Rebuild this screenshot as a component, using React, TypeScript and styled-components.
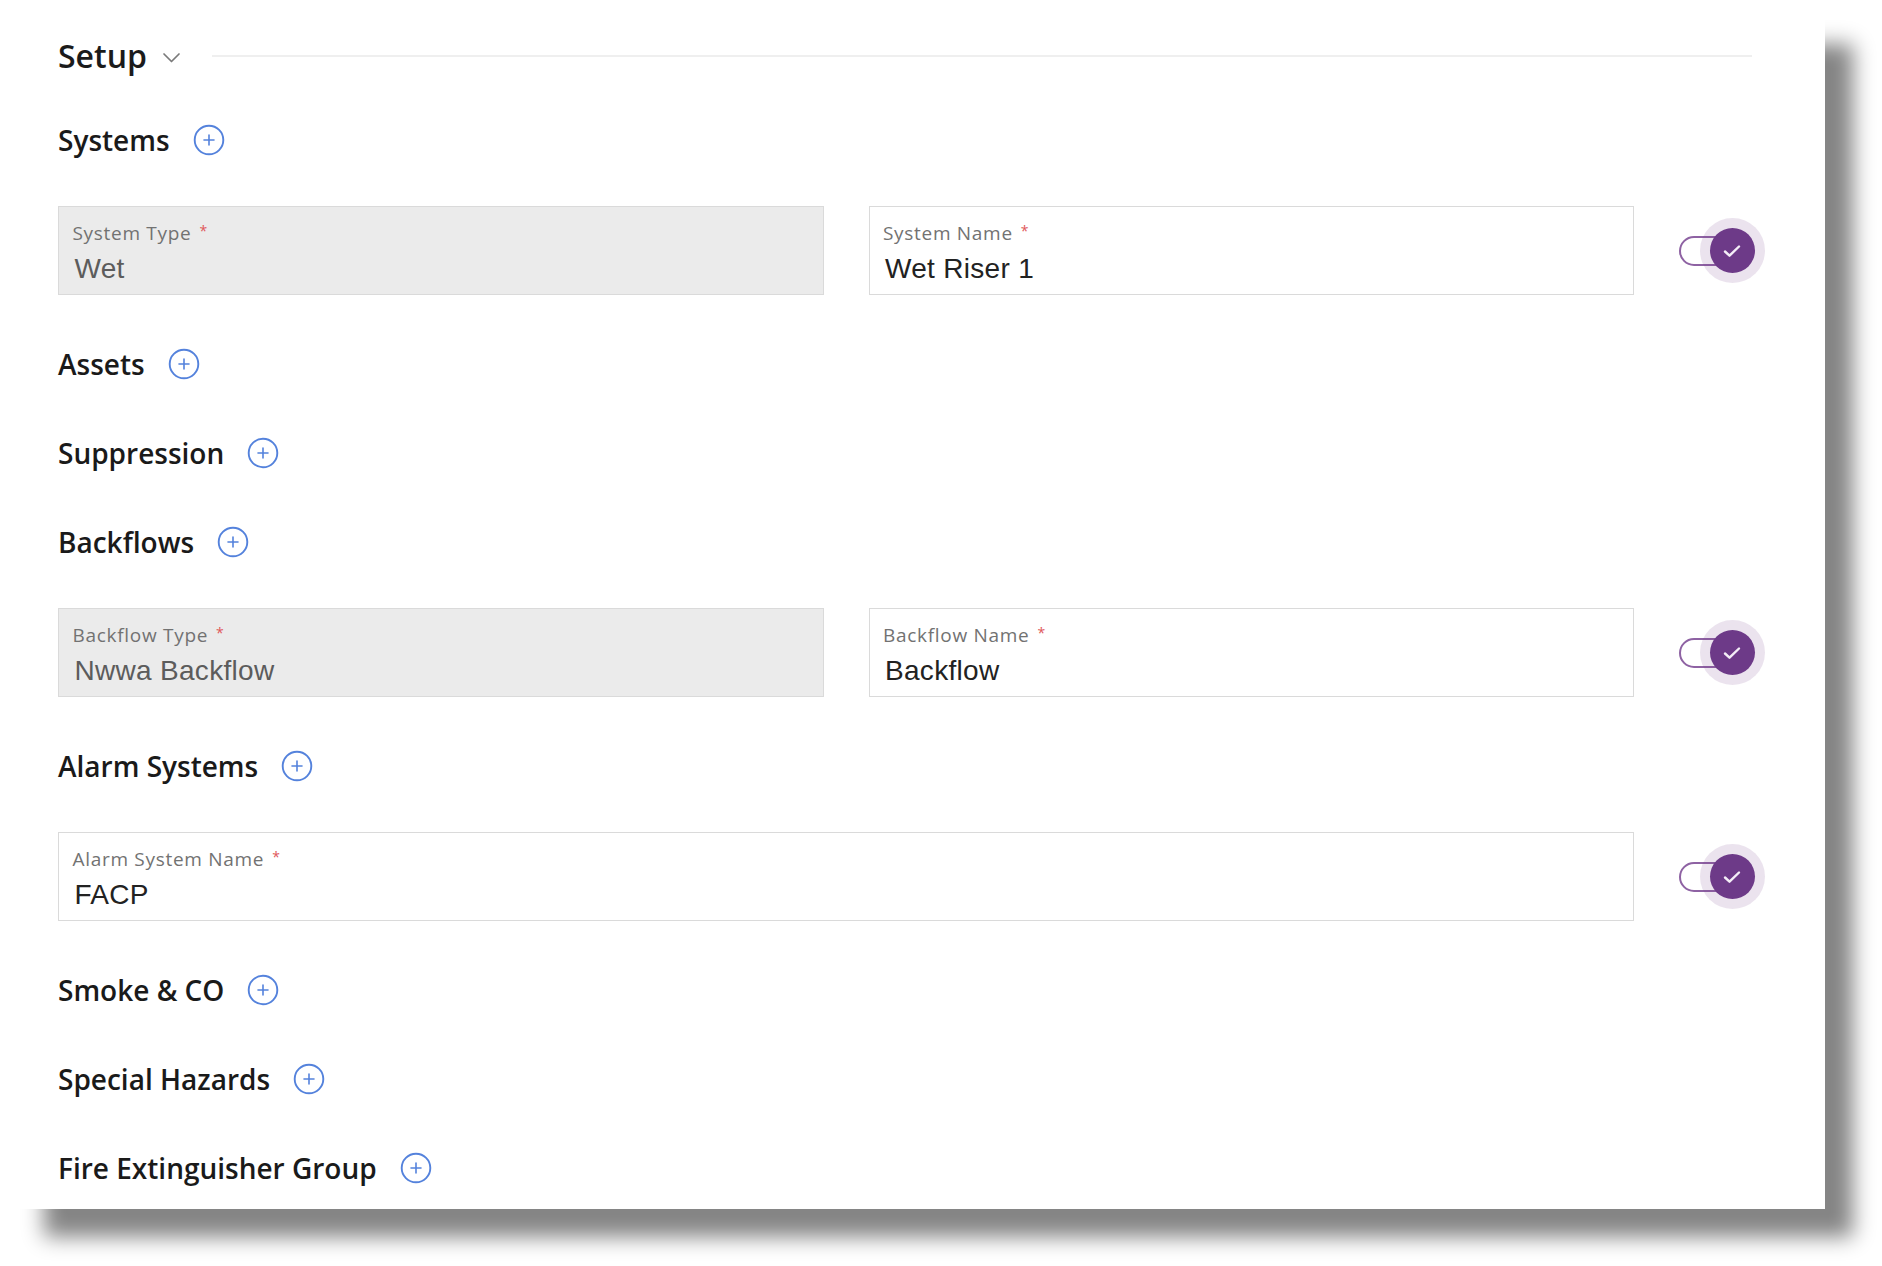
import React from "react";
import styled, { createGlobalStyle } from "styled-components";

const GlobalStyle = createGlobalStyle`
  html, body {
    margin: 0;
    padding: 0;
    background: #ffffff;
  }
  body {
    font-family: "Open Sans", "Liberation Sans", sans-serif;
    color: #1f1f1f;
  }
  * { box-sizing: border-box; }
`;

const Page = styled.div`
  width: 1882px;
  height: 1266px;
  overflow: hidden;
  background: #ffffff;
`;

const Card = styled.section`
  width: 1825px;
  height: 1209px;
  background: #ffffff;
  padding: 36px 60px 21px 58px;
  box-shadow: 36px 36px 20px -8px #858585;
  display: flex;
  flex-direction: column;
`;

const SetupBar = styled.header`
  height: 40px;
  display: flex;
  align-items: center;
  margin-bottom: 44px;
`;

const SetupTitle = styled.h1`
  margin: 0;
  font-family: "Open Sans", sans-serif;
  font-weight: 600;
  font-size: 32px;
  line-height: 40px;
  color: #1b1b1b;
`;

const Chevron = styled.svg`
  margin-left: 15px;
  margin-top: 2px;
  flex: none;
`;

const Divider = styled.div`
  flex: 1;
  height: 2px;
  background: #efefef;
  margin-left: 31px;
  margin-right: 13px;
`;

const Sections = styled.div`
  display: flex;
  flex-direction: column;
  gap: 49px;
`;

const Section = styled.div`
  display: flex;
  flex-direction: column;
  gap: 46px;
`;

const SectionHeader = styled.div`
  height: 40px;
  display: flex;
  align-items: center;
  gap: 23px;
`;

const SectionTitle = styled.h2`
  margin: 0;
  font-family: "Open Sans", sans-serif;
  font-weight: 600;
  font-size: 28px;
  line-height: 40px;
  color: #1a1a1a;
`;

const AddButton = styled.button`
  border: none;
  background: none;
  padding: 0;
  width: 32px;
  height: 32px;
  display: flex;
  align-items: center;
  justify-content: center;
  cursor: pointer;
`;

const FieldRow = styled.div`
  display: grid;
  grid-template-columns: 1fr 1fr 86px;
  column-gap: 45px;
  align-items: center;
`;

const FieldBox = styled.div<{ $disabled?: boolean; $wide?: boolean }>`
  grid-column: ${(p) => (p.$wide ? "span 2" : "auto")};
  height: 89px;
  border: 1.5px solid #dadada;
  background: ${(p) => (p.$disabled ? "#ebebeb" : "#ffffff")};
  padding: 15px 14px 0 13.5px;
  display: flex;
  flex-direction: column;
`;

const FieldLabel = styled.label`
  font-family: "Open Sans", sans-serif;
  font-weight: 500;
  font-size: 19px;
  line-height: 1.2;
  letter-spacing: 0.7px;
  color: #727272;
`;

const Required = styled.span`
  color: #e0575a;
  font-size: 14px;
  margin-left: 8px;
  vertical-align: 4px;
`;

const FieldValue = styled.div<{ $disabled?: boolean }>`
  margin-top: 7px;
  padding-left: 2px;
  font-family: "Liberation Sans", Arial, sans-serif;
  font-size: 28px;
  line-height: 1.2;
  letter-spacing: 0.3px;
  color: ${(p) => (p.$disabled ? "#5c5c5c" : "#222222")};
`;

const ToggleWrap = styled.div`
  position: relative;
  width: 86px;
  height: 65px;
`;

const ToggleTrack = styled.div`
  position: absolute;
  left: 0;
  top: 17.5px;
  width: 54px;
  height: 30px;
  border: 2.5px solid #8e62a3;
  border-radius: 15px;
  background: #ffffff;
`;

const ToggleHalo = styled.div`
  position: absolute;
  left: 20.5px;
  top: 0;
  width: 65px;
  height: 65px;
  border-radius: 50%;
  background: rgba(110, 58, 136, 0.14);
`;

const ToggleThumb = styled.div`
  position: absolute;
  left: 30.5px;
  top: 10px;
  width: 45px;
  height: 45px;
  border-radius: 50%;
  background: #6d3a88;
  display: flex;
  align-items: center;
  justify-content: center;
`;

const PlusCircle = () => (
  <svg width="32" height="32" viewBox="0 0 32 32" fill="none">
    <circle cx="16" cy="16" r="14.3" stroke="#5482dc" strokeWidth="1.9" />
    <path d="M16 11v10M11 16h10" stroke="#5482dc" strokeWidth="1.6" strokeLinecap="round" />
  </svg>
);

const Toggle = () => (
  <ToggleWrap role="switch" aria-checked="true">
    <ToggleTrack />
    <ToggleHalo />
    <ToggleThumb>
      <svg width="20" height="16" viewBox="0 0 20 16" fill="none">
        <path d="M3 8.5l4.5 4.2L17 3.5" stroke="#f4eef7" strokeWidth="2.4" strokeLinecap="round" strokeLinejoin="round" />
      </svg>
    </ToggleThumb>
  </ToggleWrap>
);

type Field = { label: string; value: string; disabled?: boolean; wide?: boolean };

const FormField = ({ label, value, disabled, wide }: Field) => (
  <FieldBox $disabled={disabled} $wide={wide}>
    <FieldLabel>
      {label}
      <Required>*</Required>
    </FieldLabel>
    <FieldValue $disabled={disabled}>{value}</FieldValue>
  </FieldBox>
);

type SectionData = { title: string; fields?: Field[] };

const sections: SectionData[] = [
  {
    title: "Systems",
    fields: [
      { label: "System Type", value: "Wet", disabled: true },
      { label: "System Name", value: "Wet Riser 1" },
    ],
  },
  { title: "Assets" },
  { title: "Suppression" },
  {
    title: "Backflows",
    fields: [
      { label: "Backflow Type", value: "Nwwa Backflow", disabled: true },
      { label: "Backflow Name", value: "Backflow" },
    ],
  },
  {
    title: "Alarm Systems",
    fields: [{ label: "Alarm System Name", value: "FACP", wide: true }],
  },
  { title: "Smoke & CO" },
  { title: "Special Hazards" },
  { title: "Fire Extinguisher Group" },
];

export default function App() {
  return (
    <Page>
      <GlobalStyle />
      <Card>
        <SetupBar>
          <SetupTitle>Setup</SetupTitle>
          <Chevron width="19" height="11" viewBox="0 0 19 11" fill="none">
            <path d="M2 2l7.5 7.5L17 2" stroke="#7a7a7a" strokeWidth="1.7" strokeLinecap="round" strokeLinejoin="round" />
          </Chevron>
          <Divider />
        </SetupBar>
        <Sections>
          {sections.map((s) => (
            <Section key={s.title}>
              <SectionHeader>
                <SectionTitle>{s.title}</SectionTitle>
                <AddButton aria-label={`Add ${s.title}`}>
                  <PlusCircle />
                </AddButton>
              </SectionHeader>
              {s.fields && (
                <FieldRow>
                  {s.fields.map((f) => (
                    <FormField key={f.label} {...f} />
                  ))}
                  <Toggle />
                </FieldRow>
              )}
            </Section>
          ))}
        </Sections>
      </Card>
    </Page>
  );
}
